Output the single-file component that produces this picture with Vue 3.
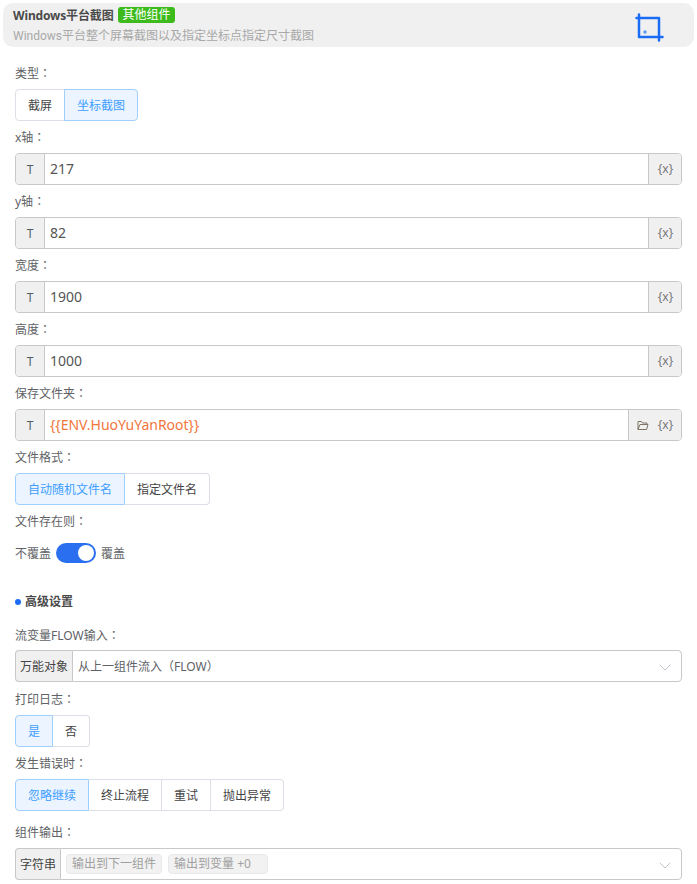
<template>
  <div class="page">
    <div class="comp-header">
      <div class="comp-info">
        <div class="comp-title">
          <span class="comp-name">Windows平台截图</span>
          <span class="comp-tag">其他组件</span>
        </div>
        <div class="comp-desc">Windows平台整个屏幕截图以及指定坐标点指定尺寸截图</div>
      </div>
      <svg class="comp-icon" width="29" height="29" viewBox="0 0 29 29" fill="none">
        <path d="M4 1.5V24H27.5M24 27.5V5H1.5" stroke="#1a6cf5" stroke-width="2.5" stroke-linecap="round" stroke-linejoin="round" />
        <circle cx="10" cy="19" r="1.7" fill="#5b9bf8" />
      </svg>
    </div>

    <div class="form">
      <div class="form-item">
        <div class="label">类型<span class="colon">：</span></div>
        <div class="radio-group">
          <span v-for="o in typeOptions" :key="o" class="radio" :class="{ on: o === '坐标截图' }">{{ o }}</span>
        </div>
      </div>

      <div v-for="f in fields" :key="f.label" class="form-item">
        <div class="label">{{ f.label }}<span class="colon">：</span></div>
        <div class="input-group">
          <span class="prefix">T</span>
          <span class="input-value" :class="{ env: f.env }">{{ f.value }}</span>
          <span class="suffix">
            <span v-if="f.env" class="folder-btn">
              <svg width="12" height="11" viewBox="0 0 12 11" fill="none">
                <path d="M1 9.5V1.5h3.5l1 1.5H10v1.5M1 9.5h8.6l1.4-5H3L1 9.5z" stroke="#7d7466" stroke-width="1" stroke-linejoin="round" />
              </svg>
            </span>
            <span class="var-btn">{x}</span>
          </span>
        </div>
      </div>

      <div class="form-item">
        <div class="label">文件格式<span class="colon">：</span></div>
        <div class="radio-group">
          <span class="radio on">自动随机文件名</span>
          <span class="radio">指定文件名</span>
        </div>
      </div>

      <div class="form-item">
        <div class="label">文件存在则<span class="colon">：</span></div>
        <div class="switch-row">
          <span>不覆盖</span>
          <span class="switch"><i></i></span>
          <span>覆盖</span>
        </div>
      </div>

      <div class="section-title">高级设置</div>

      <div class="form-item flow-item">
        <div class="label">流变量FLOW输入<span class="colon">：</span></div>
        <div class="select-group">
          <span class="select-prefix">万能对象</span>
          <div class="select-box">
            <span class="select-text">从上一组件流入（FLOW）</span>
            <svg class="arrow" width="12" height="7" viewBox="0 0 12 7" fill="none"><path d="M.8.8 6 6l5.2-5.2" stroke="#c0c4cc" stroke-width="1" /></svg>
          </div>
        </div>
      </div>

      <div class="form-item">
        <div class="label">打印日志<span class="colon">：</span></div>
        <div class="radio-group">
          <span class="radio on">是</span>
          <span class="radio">否</span>
        </div>
      </div>

      <div class="form-item">
        <div class="label">发生错误时<span class="colon">：</span></div>
        <div class="radio-group">
          <span v-for="(o, i) in errorOptions" :key="o" class="radio" :class="{ on: i === 0 }">{{ o }}</span>
        </div>
      </div>

      <div class="form-item output-item">
        <div class="label">组件输出<span class="colon">：</span></div>
        <div class="select-group">
          <span class="select-prefix narrow">字符串</span>
          <div class="select-box">
            <span class="chip">输出到下一组件</span>
            <span class="chip wide">输出到变量 +0</span>
            <svg class="arrow" width="12" height="7" viewBox="0 0 12 7" fill="none"><path d="M.8.8 6 6l5.2-5.2" stroke="#c0c4cc" stroke-width="1" /></svg>
          </div>
        </div>
      </div>
    </div>
  </div>
</template>

<script setup>
const typeOptions = ['截屏', '坐标截图']
const errorOptions = ['忽略继续', '终止流程', '重试', '抛出异常']

const fields = [
  { label: 'x轴', value: '217' },
  { label: 'y轴', value: '82' },
  { label: '宽度', value: '1900' },
  { label: '高度', value: '1000' },
  { label: '保存文件夹', value: '{{ENV.HuoYuYanRoot}}', env: true }
]
</script>

<style>
html,
body {
  background: #fff;
}
</style>

<style scoped>
.page {
  width: 697px;
  height: 884px;
  overflow: hidden;
  font-family: "Noto Sans", "Noto Sans CJK SC", sans-serif;
  font-size: 12px;
  color: #606266;
  box-sizing: border-box;
  padding-top: 3px;
}

.comp-header {
  width: 691px;
  height: 44px;
  margin-left: 3px;
  background: #f0f0f0;
  border-radius: 10px;
  display: flex;
  justify-content: space-between;
  box-sizing: border-box;
  padding: 4px 30px 0 10px;
}

.comp-title {
  display: flex;
  align-items: center;
  height: 16px;
  gap: 5px;
}

.comp-name {
  font-weight: 700;
  letter-spacing: -0.15px;
  color: #4a4a4a;
}

.comp-tag {
  background: #3dbb1c;
  color: #fff;
  border-radius: 3px;
  padding: 0 4px;
  height: 16px;
  line-height: 16px;
}

.comp-desc {
  margin-top: 5px;
  line-height: 16px;
  font-family: Roboto, "Noto Sans CJK SC", sans-serif;
  color: #a8a8a8;
}

.comp-icon {
  margin-top: 6px;
}

.form {
  padding: 10px 15px 0;
  width: 667px;
}

.label {
  height: 32px;
  line-height: 32px;
}

.colon {
  font-family: "Noto Sans CJK TC", sans-serif;
}

.radio-group {
  display: inline-flex;
  height: 32px;
}

.radio {
  display: flex;
  align-items: center;
  padding: 0 12px;
  border: 1px solid #dcdfe6;
  border-left: none;
  color: #444;
  box-sizing: border-box;
}

.radio:first-child {
  border-left: 1px solid #dcdfe6;
  border-radius: 4px 0 0 4px;
}

.radio:last-child {
  border-radius: 0 4px 4px 0;
}

.radio.on {
  background: #ecf5ff;
  border: 1px solid #a0cfff;
  color: #409eff;
}

.radio + .radio.on {
  margin-left: -1px;
}

.radio.on + .radio {
  border-left: none;
}

.input-group {
  height: 32px;
  display: flex;
  border: 1px solid #c8c8c8;
  border-radius: 4px;
  box-sizing: border-box;
}

.prefix {
  width: 28px;
  background: #f0f0f0;
  border-right: 1px solid #c8c8c8;
  border-radius: 3px 0 0 3px;
  display: flex;
  align-items: center;
  justify-content: center;
  color: #4c5a66;
}

.input-value {
  flex: 1;
  padding-left: 5px;
  font-size: 14px;
  line-height: 30px;
  color: #555;
}

.input-value.env {
  color: #f2763c;
}

.suffix {
  display: flex;
  align-items: center;
  background: #f0f0f0;
  border-left: 1px solid #c8c8c8;
  border-radius: 0 3px 3px 0;
}

.folder-btn {
  width: 20px;
  display: flex;
  justify-content: flex-end;
}

.var-btn {
  width: 32px;
  padding: 0 0 2px 1px;
  box-sizing: border-box;
  text-align: center;
  color: #777;
}

.switch-row {
  height: 32px;
  display: flex;
  align-items: center;
  gap: 5px;
}

.switch {
  width: 40px;
  height: 20px;
  border-radius: 10px;
  background: #2a6ff0;
  position: relative;
}

.switch i {
  position: absolute;
  top: 2px;
  right: 2px;
  width: 16px;
  height: 16px;
  border-radius: 50%;
  background: #fff;
}

.section-title {
  margin-top: 25px;
  height: 16px;
  line-height: 16px;
  font-weight: 700;
  color: #4a4a4a;
  padding-left: 10px;
  position: relative;
}

.section-title::before {
  content: "";
  position: absolute;
  left: 0;
  top: 5px;
  width: 6px;
  height: 6px;
  border-radius: 50%;
  background: #1a6cf5;
}

.flow-item {
  margin-top: 9px;
  margin-bottom: 1px;
}

.flow-item .label {
  height: 31px;
}

.output-item {
  margin-top: 5px;
}

.select-group {
  height: 32px;
  display: flex;
}

.select-prefix {
  width: 57px;
  background: #f0f0f0;
  border: 1px solid #c8c8c8;
  border-right: none;
  border-radius: 4px 0 0 4px;
  display: flex;
  align-items: center;
  justify-content: center;
  color: #444;
  box-sizing: border-box;
  flex-shrink: 0;
}

.select-prefix.narrow {
  width: 45px;
}

.select-box {
  flex: 1;
  border: 1px solid #c8c8c8;
  border-radius: 0 4px 4px 0;
  display: flex;
  align-items: center;
  gap: 6px;
  padding: 0 5px;
  position: relative;
  box-sizing: border-box;
}

.select-text {
  color: #606266;
}

.chip {
  background: #f2f2f2;
  border: 1px solid #e9e9eb;
  border-radius: 4px;
  color: #a0a0a0;
  height: 20px;
  line-height: 18px;
  padding: 0 5px;
  box-sizing: border-box;
}

.chip.wide {
  padding-right: 16px;
}

.arrow {
  position: absolute;
  right: 10px;
  top: 13px;
}
</style>
